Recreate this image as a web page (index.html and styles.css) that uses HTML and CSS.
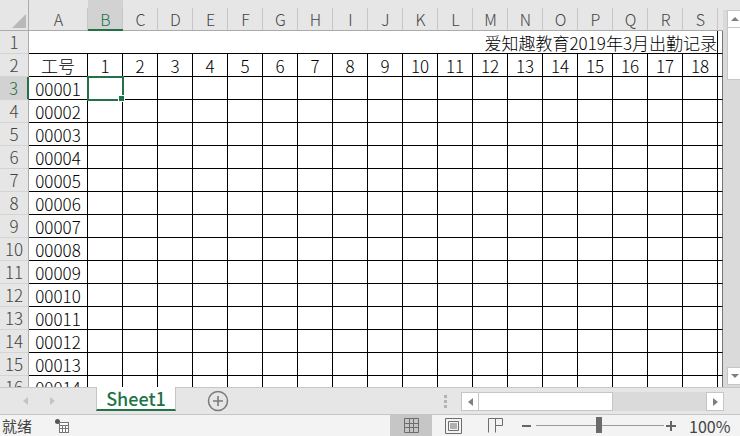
FILE: index.html
```html
<!DOCTYPE html>
<html lang="zh-CN">
<head>
    <meta charset="UTF-8">
    <meta name="viewport" content="width=device-width, initial-scale=1.0">
    <title>出勤记录</title>
    <link rel="stylesheet" href="styles.css">
</head>
<body>
    <div class="excel">
        <div class="main">
            <div class="grid" id="grid"></div>
            <div class="vscroll">
                <div class="vbtn"><span class="tri up"></span></div>
                <div class="vthumb"></div>
                <div class="vtrack"></div>
                <div class="vbtn"><span class="tri down"></span></div>
            </div>
        </div>

        <div class="tabbar">
            <div class="nav">
                <span class="tri left light"></span>
                <span class="tri right light"></span>
            </div>
            <div class="tab">Sheet1</div>
            <svg class="addsheet" width="22" height="22" viewBox="0 0 22 22">
                <circle cx="11" cy="11" r="9.5" fill="none" stroke="#7a7a7a" stroke-width="1.5"/>
                <path d="M11 6v10M6 11h10" stroke="#7a7a7a" stroke-width="1.6"/>
            </svg>
            <div class="dots"><i></i><i></i><i></i></div>
            <div class="hscroll">
                <div class="hbtn"><span class="tri left"></span></div>
                <div class="hthumb"></div>
                <div class="htrack"></div>
                <div class="hbtn"><span class="tri right"></span></div>
            </div>
        </div>

        <div class="status">
            <span class="ready">就绪</span>
            <svg class="macro" width="14" height="14" viewBox="0 0 14 14">
                <circle cx="2.5" cy="2.5" r="2.5" fill="#555"/>
                <rect x="4.5" y="3.5" width="9" height="10" fill="#fff" stroke="#777"/>
                <path d="M4.5 6.5h9M7.5 6.5v7M10.5 6.5v7M4.5 9.5h9" stroke="#777"/>
            </svg>
            <div class="views">
                <div class="view on">
                    <svg width="15" height="15" viewBox="0 0 15 15">
                        <path d="M0.5 0.5h14v14h-14zM5.5 0.5v14M9.5 0.5v14M0.5 5.5h14M0.5 9.5h14" fill="none" stroke="#6d6d6d"/>
                    </svg>
                </div>
                <div class="view">
                    <svg width="17" height="16" viewBox="0 0 17 16">
                        <path d="M0.5 0.5h16v15h-16z" fill="none" stroke="#6d6d6d"/>
                        <path d="M3.5 3.5h10v9h-10z" fill="none" stroke="#6d6d6d"/>
                        <path d="M5 6h7M5 8h7M5 10h7" stroke="#6d6d6d"/>
                    </svg>
                </div>
                <div class="view">
                    <svg width="15" height="15" viewBox="0 0 15 15">
                        <path d="M0.5 14.5v-14h14v7h-7v7M7.5 0.5v7" fill="none" stroke="#6d6d6d"/>
                    </svg>
                </div>
            </div>
            <svg class="zbtn" width="10" height="10" viewBox="0 0 10 10">
                <path d="M0 5h9" stroke="#666" stroke-width="2"/>
            </svg>
            <div class="slider"><span class="knob"></span></div>
            <svg class="zbtn" width="10" height="10" viewBox="0 0 10 10">
                <path d="M0 5h10M5 0v10" stroke="#666" stroke-width="2"/>
            </svg>
            <span class="zoom">100%</span>
        </div>
    </div>

    <script>
        var cols = "ABCDEFGHIJKLMNOPQRS".split("");
        var grid = document.getElementById('grid');

        function add(cls, text){
            var d = document.createElement('div');
            d.className = cls;
            if (text !== undefined) d.textContent = text;
            grid.appendChild(d);
            return d;
        }

        function pad(n){
            var s = "" + n;
            while (s.length < 5) s = "0" + s;
            return s;
        }

        // column headers
        add('corner');
        for (var i = 0; i < cols.length; i++){
            add(cols[i] == 'B' ? 'colhead active' : 'colhead', cols[i]);
        }
        add('colhead edgehead');

        // row 1 - title
        add('rowhead', '1');
        add('cell title', '爱知趣教育2019年3月出勤记录');
        add('cell edge');

        // row 2 - day numbers
        add('rowhead', '2');
        add('cell', '工号');
        for (var d = 1; d <= 18; d++){
            add('cell', d);
        }
        add('cell edge');

        // rows 3..16 - staff
        for (var r = 3; r <= 16; r++){
            add(r == 3 ? 'rowhead active' : 'rowhead', r);
            add('cell', pad(r - 2));
            for (var c = 0; c < 18; c++){
                add(r == 3 && c == 0 ? 'cell selected' : 'cell');
            }
            add('cell edge');
        }
    </script>
</body>
</html>
```

FILE: styles.css
```css
body {
    margin: 0;
    font-family: "Noto Sans CJK SC", "Noto Sans", sans-serif;
    color: #000;
}

.excel {
    width: 740px;
    height: 436px;
    display: flex;
    flex-direction: column;
    overflow: hidden;
    background: #fff;
}

.main {
    display: flex;
    height: 387px;
    flex: none;
}

/* ---------- sheet grid ---------- */
.grid {
    width: 723px;
    height: 387px;
    display: grid;
    grid-template-columns: 29px 59px repeat(18, 35px) 5px;
    grid-template-rows: 31px repeat(16, 23px);
    align-content: start;
    overflow: hidden;
}

.grid > div {
    box-sizing: border-box;
    white-space: nowrap;
}

.corner {
    background: #e6e6e6;
    border-right: 1px solid #ababab;
    border-bottom: 1px solid #ababab;
    display: flex;
    align-items: flex-end;
    justify-content: flex-end;
    padding: 0 2px 2px 0;
}

.corner::after {
    content: "";
    width: 0;
    height: 0;
    border-left: 14px solid transparent;
    border-bottom: 14px solid #b9b9b9;
}

.colhead {
    background: #e6e6e6 linear-gradient(#c6c6c6, #c6c6c6) no-repeat right bottom / 1px 22px;
    border-bottom: 1px solid #ababab;
    text-align: center;
    padding-top: 9px;
    line-height: 21px;
    font-size: 16px;
    font-weight: 300;
    color: #444;
}

.colhead.active {
    background-color: #d2d2d2;
    color: #217346;
    border-bottom: 2px solid #217346;
}

.edgehead {
    background-image: none;
}

.rowhead {
    background: #e6e6e6;
    border-right: 1px solid #ababab;
    border-bottom: 1px solid #d4d4d4;
    text-align: center;
    font-size: 17px;
    font-weight: 300;
    line-height: 22px;
    color: #444;
}

.rowhead.active {
    background: #d2d2d2;
    color: #217346;
    border-right: 2px solid #217346;
}

.cell {
    border-right: 1px solid #000;
    border-bottom: 1px solid #000;
    text-align: center;
    font-size: 17px;
    font-weight: 300;
    line-height: 22px;
    padding-top: 1px;
}

.title {
    grid-column: span 19;
    text-align: right;
}

.edge {
    border-right-color: #777;
}

.selected {
    position: relative;
    outline: 2px solid #217346;
    outline-offset: -1px;
}

.selected::after {
    content: "";
    position: absolute;
    right: -3px;
    bottom: -3px;
    width: 5px;
    height: 5px;
    background: #217346;
    border: 1px solid #fff;
}

/* ---------- vertical scrollbar ---------- */
.vscroll {
    width: 17px;
    background: linear-gradient(#e6e6e6 10px, #dadada 10px);
    display: flex;
    flex-direction: column;
    padding: 10px 0 2px 4px;
    box-sizing: border-box;
    overflow: hidden;
}

.vbtn {
    flex: none;
    width: 16px;
    height: 18px;
    box-sizing: border-box;
    background: #fff;
    border: 1px solid #c6c6c6;
    display: flex;
    align-items: center;
    justify-content: center;
}

.vthumb {
    flex: none;
    width: 16px;
    height: 52px;
    box-sizing: border-box;
    background: #fff;
    border: 1px solid #c6c6c6;
    border-top: none;
}

.vtrack {
    flex: 1;
}

/* triangles */
.tri {
    display: inline-block;
    width: 0;
    height: 0;
}

.tri.up {
    border-left: 4px solid transparent;
    border-right: 4px solid transparent;
    border-bottom: 4px solid #7f7f7f;
}

.tri.down {
    border-left: 4px solid transparent;
    border-right: 4px solid transparent;
    border-top: 4px solid #7f7f7f;
}

.tri.left {
    border-top: 4px solid transparent;
    border-bottom: 4px solid transparent;
    border-right: 5px solid #7f7f7f;
}

.tri.right {
    border-top: 4px solid transparent;
    border-bottom: 4px solid transparent;
    border-left: 5px solid #7f7f7f;
}

.tri.left.light {
    border-right-color: #c3c3c3;
}

.tri.right.light {
    border-left-color: #c3c3c3;
}

/* ---------- sheet tabs ---------- */
.tabbar {
    height: 28px;
    flex: none;
    box-sizing: border-box;
    background: #e6e6e6;
    border-top: 1px solid #c6c6c6;
    border-bottom: 1px solid #c6c6c6;
    display: flex;
    align-items: flex-start;
}

.nav {
    width: 96px;
    height: 26px;
    display: flex;
    align-items: center;
    padding-left: 23px;
    gap: 22px;
    box-sizing: border-box;
}

.tab {
    width: 80px;
    height: 24px;
    margin-top: -1px;
    box-sizing: border-box;
    background: #fff;
    border-left: 1px solid #c6c6c6;
    border-right: 1px solid #c6c6c6;
    border-bottom: 2px solid #217346;
    color: #217346;
    font-size: 18px;
    font-weight: 500;
    line-height: 22px;
    text-align: center;
}

.addsheet {
    margin: 2px 0 0 31px;
}

.dots {
    margin: 7px 0 0 auto;
    display: flex;
    flex-direction: column;
    gap: 2px;
}

.dots i {
    width: 3px;
    height: 3px;
    background: #b3b3b3;
}

.hscroll {
    margin: 4px 16px 0 14px;
    width: 263px;
    height: 19px;
    display: flex;
}

.hbtn {
    width: 18px;
    box-sizing: border-box;
    background: #fff;
    border: 1px solid #c6c6c6;
    display: flex;
    align-items: center;
    justify-content: center;
}

.hthumb {
    width: 134px;
    box-sizing: border-box;
    background: #fff;
    border: 1px solid #c6c6c6;
    border-left: none;
}

.htrack {
    flex: 1;
    background: #dadada;
}

/* ---------- status bar ---------- */
.status {
    height: 21px;
    flex: none;
    background: #f3f3f3;
    display: flex;
    align-items: center;
    font-size: 15px;
    color: #444;
}

.ready {
    margin-left: 2px;
    width: 32px;
}

.macro {
    margin-left: 21px;
}

.views {
    display: flex;
    height: 21px;
    margin-left: 321px;
}

.view {
    width: 42px;
    display: flex;
    align-items: center;
    justify-content: center;
}

.view.on {
    background: #c6c6c6;
}

.zbtn {
    margin-left: 6px;
}

.slider {
    width: 128px;
    height: 1px;
    margin: 0 2px 0 4px;
    background: #9a9a9a;
    position: relative;
}

.knob {
    position: absolute;
    left: 60px;
    top: -8px;
    width: 6px;
    height: 16px;
    background: #6b6b6b;
}

.zbtn + .slider + .zbtn {
    margin-left: 0;
}

.zoom {
    margin-left: 13px;
    font-size: 16px;
}
```
